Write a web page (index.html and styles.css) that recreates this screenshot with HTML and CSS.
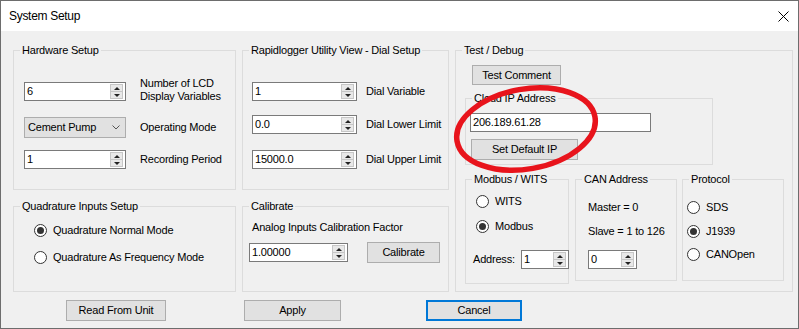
FILE: index.html
```html
<!DOCTYPE html>
<html lang="en">
<head>
  <meta charset="UTF-8" />
  <meta name="viewport" content="width=device-width, initial-scale=1.0"/>
  <title>System Setup</title>
  <link rel="stylesheet" href="styles.css">
</head>
<body>
  <div class="window">
    <div class="titlebar">
      <span>System Setup</span>
      <svg class="close" width="11" height="11" viewBox="0 0 11 11">
        <path d="M0.5 0.5L10.5 10.5M10.5 0.5L0.5 10.5" stroke="#000" stroke-width="1"/>
      </svg>
    </div>

    <div class="content">
      <div class="panels">

        <!-- Hardware -->
        <div class="group hardware">
          <div class="group-title">Hardware Setup</div>
          <div class="field hw-lcd">
            <div class="spin hw-ctl">
              <span class="spin-value">6</span>
              <span class="spin-arrows"><span class="spin-up"></span><span class="spin-down"></span></span>
            </div>
            <div class="field-label two-line">Number of LCD<br>Display Variables</div>
          </div>
          <div class="field hw-mode">
            <div class="select hw-ctl">
              <span>Cement Pump</span>
              <svg width="8" height="5" viewBox="0 0 8 5"><path d="M0.5 0.5L4 4L7.5 0.5" fill="none" stroke="#555" stroke-width="1"/></svg>
            </div>
            <div class="field-label">Operating Mode</div>
          </div>
          <div class="field hw-period">
            <div class="spin hw-ctl">
              <span class="spin-value">1</span>
              <span class="spin-arrows"><span class="spin-up"></span><span class="spin-down"></span></span>
            </div>
            <div class="field-label">Recording Period</div>
          </div>
        </div>

        <!-- Dial setup -->
        <div class="group dial">
          <div class="group-title">Rapidlogger Utility View - Dial Setup</div>
          <div class="field dial-var">
            <div class="spin dial-ctl">
              <span class="spin-value">1</span>
              <span class="spin-arrows"><span class="spin-up"></span><span class="spin-down"></span></span>
            </div>
            <div class="field-label">Dial Variable</div>
          </div>
          <div class="field dial-lower">
            <div class="spin dial-ctl">
              <span class="spin-value">0.0</span>
              <span class="spin-arrows"><span class="spin-up"></span><span class="spin-down"></span></span>
            </div>
            <div class="field-label">Dial Lower Limit</div>
          </div>
          <div class="field dial-upper">
            <div class="spin dial-ctl">
              <span class="spin-value">15000.0</span>
              <span class="spin-arrows"><span class="spin-up"></span><span class="spin-down"></span></span>
            </div>
            <div class="field-label">Dial Upper Limit</div>
          </div>
        </div>

        <!-- Test / Debug -->
        <div class="group debug">
          <div class="group-title">Test / Debug</div>
          <button class="btn btn-comment">Test Comment</button>

          <div class="group cloud">
            <div class="group-title">Cloud IP Address</div>
            <div class="textbox ip-box">206.189.61.28</div>
            <button class="btn btn-default-ip">Set Default IP</button>
          </div>

          <div class="subgroups">
            <div class="group modbus">
              <div class="group-title">Modbus / WITS</div>
              <div class="radio modbus-wits"><span class="radio-mark"></span>WITS</div>
              <div class="radio checked modbus-mb"><span class="radio-mark"></span>Modbus</div>
              <div class="field modbus-addr">
                <span class="addr-label">Address:</span>
                <div class="spin addr-ctl">
                  <span class="spin-value">1</span>
                  <span class="spin-arrows"><span class="spin-up"></span><span class="spin-down"></span></span>
                </div>
              </div>
            </div>

            <div class="group can">
              <div class="group-title">CAN Address</div>
              <div class="can-line can-master">Master = 0</div>
              <div class="can-line can-slave">Slave = 1 to 126</div>
              <div class="spin can-ctl">
                <span class="spin-value">0</span>
                <span class="spin-arrows"><span class="spin-up"></span><span class="spin-down"></span></span>
              </div>
            </div>

            <div class="group protocol">
              <div class="group-title">Protocol</div>
              <div class="radio proto-sds"><span class="radio-mark"></span>SDS</div>
              <div class="radio checked proto-j1939"><span class="radio-mark"></span>J1939</div>
              <div class="radio proto-canopen"><span class="radio-mark"></span>CANOpen</div>
            </div>
          </div>
        </div>

        <!-- Quadrature -->
        <div class="group quad">
          <div class="group-title">Quadrature Inputs Setup</div>
          <div class="radio checked quad-normal"><span class="radio-mark"></span>Quadrature Normal Mode</div>
          <div class="radio quad-freq"><span class="radio-mark"></span>Quadrature As Frequency Mode</div>
        </div>

        <!-- Calibrate -->
        <div class="group calibrate">
          <div class="group-title">Calibrate</div>
          <div class="cal-text">Analog Inputs Calibration Factor</div>
          <div class="field cal-row">
            <div class="spin cal-ctl">
              <span class="spin-value">1.00000</span>
              <span class="spin-arrows"><span class="spin-up"></span><span class="spin-down"></span></span>
            </div>
            <button class="btn btn-calibrate">Calibrate</button>
          </div>
        </div>

      </div>

      <div class="actions">
        <button class="btn btn-read">Read From Unit</button>
        <button class="btn btn-apply">Apply</button>
        <button class="btn btn-cancel">Cancel</button>
      </div>
    </div>

    <!-- red marker drawn over the dialog -->
    <svg class="marker" width="170" height="120" viewBox="0 0 170 120">
      <ellipse cx="85" cy="58" rx="70" ry="40" transform="rotate(-10 85 58)" fill="none" stroke="#e8141c" stroke-width="5.5"/>
    </svg>
  </div>
</body>
</html>
```

FILE: styles.css
```css
* {
  box-sizing: border-box;
}

body {
  margin: 0;
  font: 11px/15px "Liberation Sans", Arial, sans-serif;
  letter-spacing: -0.2px;
  color: #000;
  background: #fff;
}

.window {
  position: relative;
  width: 799px;
  height: 329px;
  border: 1px solid #6d6d6d;
  background: #f0f0f0;
  overflow: hidden;
}

.titlebar {
  display: flex;
  align-items: center;
  justify-content: space-between;
  height: 30px;
  padding: 0 9px 0 8px;
  background: #fff;
  font-size: 12px;
  letter-spacing: -0.3px;
}

.content {
  padding: 19px 0 0 12px;
}

.panels {
  display: grid;
  grid-template-columns: 223px 207px 338px;
  grid-template-rows: 140px 86px;
  gap: 16px 6px;
}

/* group boxes */
.group {
  border: 1px solid #dcdcdc;
}

.group-title {
  width: fit-content;
  margin: -8px 0 0 6px;
  padding: 0 2px;
  background: #f0f0f0;
  white-space: nowrap;
}

.debug {
  grid-column: 3;
  grid-row: 1 / 3;
}

/* generic controls */
.field {
  display: flex;
  align-items: center;
  height: 19px;
}

.spin {
  display: flex;
  align-items: center;
  flex-shrink: 0;
  height: 19px;
  padding: 0 2px 0 2px;
  background: #fff;
  border: 1px solid #7a7a7a;
}

.spin-value {
  flex: 1;
}

.spin-arrows {
  display: flex;
  flex-direction: column;
  width: 13px;
  height: 15px;
}

.spin-arrows span {
  flex: 1;
  display: flex;
  align-items: center;
  justify-content: center;
  background: #e8e8e8;
  border: 1px solid #c6c6c6;
}

.spin-arrows span + span {
  border-top: 0;
}

.spin-up::before {
  content: "";
  border: 3px solid transparent;
  border-top: 0;
  border-bottom-color: #222;
}

.spin-down::before {
  content: "";
  border: 3px solid transparent;
  border-bottom: 0;
  border-top-color: #222;
}

.select {
  display: flex;
  align-items: center;
  justify-content: space-between;
  height: 21px;
  padding: 0 5px 0 3px;
  background: #e1e1e1;
  border: 1px solid #adadad;
}

.textbox {
  height: 19px;
  padding: 1px 2px;
  background: #fff;
  border: 1px solid #7a7a7a;
  line-height: 15px;
}

.btn {
  display: flex;
  align-items: center;
  justify-content: center;
  height: 21px;
  padding: 0;
  font: inherit;
  letter-spacing: inherit;
  color: #000;
  background: #e1e1e1;
  border: 1px solid #adadad;
  border-radius: 0;
}

.radio {
  display: flex;
  align-items: center;
  height: 15px;
  white-space: nowrap;
}

.radio-mark {
  display: flex;
  align-items: center;
  justify-content: center;
  width: 13px;
  height: 13px;
  margin-right: 6px;
  border: 1px solid #333;
  border-radius: 50%;
  background: #fff;
}

.radio.checked .radio-mark::after {
  content: "";
  width: 7px;
  height: 7px;
  border-radius: 50%;
  background: #333;
}

/* hardware setup */
.hardware .field {
  margin-left: 10px;
}

.hw-ctl {
  width: 102px;
}

.hardware .field-label {
  margin-left: 14px;
}

.two-line {
  line-height: 13px;
  margin-top: -4px;
}

.hw-lcd { margin-top: 24px; }
.hw-mode { margin-top: 16px; height: 21px; }
.hw-period { margin-top: 12px; }

/* dial setup */
.dial .field {
  margin-left: 9px;
}

.dial-ctl {
  width: 105px;
}

.dial .field-label {
  margin-left: 9px;
}

.dial-var { margin-top: 24px; }
.dial-lower { margin-top: 14px; }
.dial-upper { margin-top: 16px; }

/* quadrature */
.quad .radio {
  margin-left: 20px;
}

.quad-normal { margin-top: 9px; }
.quad-freq { margin-top: 12px; }

/* calibrate */
.cal-text {
  margin: 6px 0 0 9px;
}

.cal-row {
  height: 21px;
  margin: 7px 0 0 6px;
}

.cal-ctl {
  width: 99px;
}

.btn-calibrate {
  width: 73px;
  margin-left: 19px;
}

/* test / debug */
.btn-comment {
  width: 89px;
  height: 20px;
  margin: 7px 0 0 16px;
}

.cloud {
  width: 248px;
  height: 67px;
  margin: 13px 0 0 9px;
}

.ip-box {
  width: 181px;
  margin: 7px 0 0 4px;
}

.btn-default-ip {
  width: 107px;
  margin: 7px 0 0 5px;
}

.subgroups {
  display: flex;
  align-items: flex-start;
  margin: 14px 0 0 9px;
}

.modbus {
  width: 104px;
  height: 105px;
}

.can {
  width: 102px;
  height: 102px;
  margin-left: 6px;
}

.protocol {
  width: 102px;
  height: 102px;
  margin-left: 5px;
}

.modbus .radio {
  margin-left: 10px;
}

.modbus-wits { margin-top: 7px; }
.modbus-mb { margin-top: 10px; }

.modbus-addr {
  margin: 16px 0 0 7px;
}

.addr-label {
  width: 48px;
  flex-shrink: 0;
}

.addr-ctl {
  width: 48px;
}

.can-line {
  margin-left: 12px;
}

.can-master { margin-top: 13px; }
.can-slave { margin-top: 9px; }

.can-ctl {
  width: 49px;
  margin: 11px 0 0 12px;
}

.protocol .radio {
  margin-left: 4px;
}

.proto-sds { margin-top: 13px; }
.proto-j1939 { margin-top: 9px; }
.proto-canopen { margin-top: 8px; }

/* bottom buttons */
.actions {
  display: flex;
  margin-top: 8px;
}

.btn-read {
  width: 100px;
  margin-left: 53px;
}

.btn-apply {
  width: 97px;
  margin-left: 78px;
}

.btn-cancel {
  width: 96px;
  margin-left: 85px;
  border: 2px solid #0078d7;
}

.marker {
  position: absolute;
  left: 440px;
  top: 70px;
  pointer-events: none;
}
```
